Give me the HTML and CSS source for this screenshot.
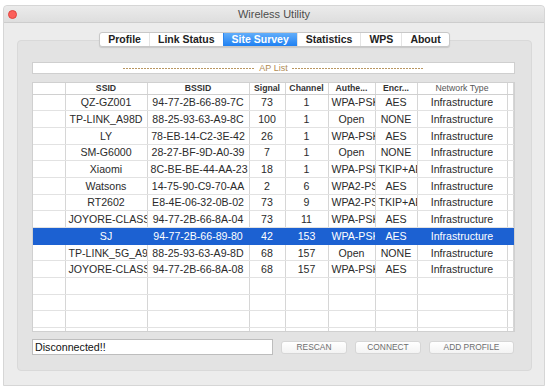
FILE: index.html
```html
<!DOCTYPE html>
<html lang="en">
<head>
    <meta charset="UTF-8">
    <meta name="viewport" content="width=device-width, initial-scale=1.0">
    <title>Wireless Utility</title>
    <link rel="stylesheet" href="styles.css">
</head>
<body>

<div class="window">
    <div class="titlebar">
        <span class="close-btn"></span>
        <span class="title">Wireless Utility</span>
        <span></span>
    </div>

    <div class="content">
        <div class="tabs">
            <span class="tab">Profile</span>
            <span class="tab">Link Status</span>
            <span class="tab active">Site Survey</span>
            <span class="tab">Statistics</span>
            <span class="tab">WPS</span>
            <span class="tab">About</span>
        </div>

        <div class="panel">
            <div class="group-title">
                <span class="dash"></span>
                <span class="group-label">AP List</span>
                <span class="dash"></span>
            </div>

            <div class="ap-table-wrap">
                <table class="ap-table">
                    <colgroup>
                        <col style="width:32px">
                        <col style="width:82px">
                        <col style="width:102px">
                        <col style="width:36px">
                        <col style="width:43px">
                        <col style="width:47px">
                        <col style="width:42px">
                        <col style="width:90px">
                        <col>
                    </colgroup>
                    <thead>
                        <tr>
                            <th></th>
                            <th>SSID</th>
                            <th>BSSID</th>
                            <th>Signal</th>
                            <th>Channel</th>
                            <th>Authe...</th>
                            <th>Encr...</th>
                            <th class="plain">Network Type</th>
                            <th></th>
                        </tr>
                    </thead>
                    <tbody>
                        <tr><td></td><td>QZ-GZ001</td><td>94-77-2B-66-89-7C</td><td>73</td><td>1</td><td>WPA-PSK</td><td>AES</td><td>Infrastructure</td><td></td></tr>
                        <tr><td></td><td>TP-LINK_A98D</td><td>88-25-93-63-A9-8C</td><td>100</td><td>1</td><td>Open</td><td>NONE</td><td>Infrastructure</td><td></td></tr>
                        <tr><td></td><td>LY</td><td>78-EB-14-C2-3E-42</td><td>26</td><td>1</td><td>WPA-PSK</td><td>AES</td><td>Infrastructure</td><td></td></tr>
                        <tr><td></td><td>SM-G6000</td><td>28-27-BF-9D-A0-39</td><td>7</td><td>1</td><td>Open</td><td>NONE</td><td>Infrastructure</td><td></td></tr>
                        <tr><td></td><td>Xiaomi</td><td>8C-BE-BE-44-AA-23</td><td>18</td><td>1</td><td>WPA-PSK</td><td>TKIP+AES</td><td>Infrastructure</td><td></td></tr>
                        <tr><td></td><td>Watsons</td><td>14-75-90-C9-70-AA</td><td>2</td><td>6</td><td>WPA2-PSK</td><td>AES</td><td>Infrastructure</td><td></td></tr>
                        <tr><td></td><td>RT2602</td><td>E8-4E-06-32-0B-02</td><td>73</td><td>9</td><td>WPA2-PSK</td><td>TKIP+AES</td><td>Infrastructure</td><td></td></tr>
                        <tr><td></td><td>JOYORE-CLASS</td><td>94-77-2B-66-8A-04</td><td>73</td><td>11</td><td>WPA-PSK</td><td>AES</td><td>Infrastructure</td><td></td></tr>
                        <tr class="selected"><td></td><td>SJ</td><td>94-77-2B-66-89-80</td><td>42</td><td>153</td><td>WPA-PSK</td><td>AES</td><td>Infrastructure</td><td></td></tr>
                        <tr><td></td><td>TP-LINK_5G_A98D</td><td>88-25-93-63-A9-8D</td><td>68</td><td>157</td><td>Open</td><td>NONE</td><td>Infrastructure</td><td></td></tr>
                        <tr><td></td><td>JOYORE-CLASS</td><td>94-77-2B-66-8A-08</td><td>68</td><td>157</td><td>WPA-PSK</td><td>AES</td><td>Infrastructure</td><td></td></tr>
                        <tr><td></td><td></td><td></td><td></td><td></td><td></td><td></td><td></td><td></td></tr>
                        <tr><td></td><td></td><td></td><td></td><td></td><td></td><td></td><td></td><td></td></tr>
                        <tr><td></td><td></td><td></td><td></td><td></td><td></td><td></td><td></td><td></td></tr>
                        <tr><td></td><td></td><td></td><td></td><td></td><td></td><td></td><td></td><td></td></tr>
                    </tbody>
                </table>
            </div>

            <div class="status-row">
                <div class="status">Disconnected!!</div>
                <button class="btn">RESCAN</button>
                <button class="btn">CONNECT</button>
                <button class="btn btn-wide">ADD PROFILE</button>
            </div>
        </div>
    </div>
</div>

</body>
</html>
```

FILE: styles.css
```css
* {
    box-sizing: border-box;
}
body {
    margin: 0;
    background: #fff;
    font-family: "Liberation Sans", Arial, sans-serif;
    color: #333;
}
.window {
    margin: 5px 0 0 3px;
    width: 542px;
    height: 381px;
    background: #ececec;
    border: 1px solid #d6d6d6;
    border-radius: 4px 4px 0 0;
    display: flex;
    flex-direction: column;
}
.titlebar {
    height: 17px;
    display: grid;
    grid-template-columns: 1fr auto 1fr;
    align-items: center;
    background: linear-gradient(#ebebeb, #dedede);
    border-bottom: 1px solid #cdcdcd;
    border-radius: 4px 4px 0 0;
}
.close-btn {
    width: 9px;
    height: 9px;
    margin-left: 4px;
    border-radius: 50%;
    background: #fc605b;
    border: 1px solid #e0443e;
}
.title {
    font-size: 11px;
    color: #4d4d4d;
}
.content {
    flex: 1;
    padding: 9px 12px 14px 13px;
    display: flex;
    flex-direction: column;
}
.tabs {
    align-self: center;
    display: flex;
    height: 15px;
    margin-bottom: -7px;
    position: relative;
    z-index: 1;
    background: #fff;
    border: 1px solid #c8c8c8;
    border-radius: 3px;
    box-shadow: 0 1px 1px rgba(0, 0, 0, 0.12);
    overflow: hidden;
}
.tab {
    padding: 0 8px;
    font-size: 10.5px;
    font-weight: bold;
    line-height: 13px;
    color: #222;
    border-left: 1px solid #e4e4e4;
}
.tab:first-child {
    border-left: none;
}
.tab.active {
    background: linear-gradient(#62aefa, #1f80f2);
    color: #fff;
    border-left-color: #2c86ef;
}
.panel {
    flex: 1;
    background: #e3e3e3;
    border: 1px solid #d9d9d9;
    border-radius: 4px;
    padding: 21px 16px 14px 14px;
    display: flex;
    flex-direction: column;
}
.group-title {
    height: 12px;
    background: #fff;
    border: 1px solid #cfcfcf;
    display: flex;
    align-items: center;
    justify-content: center;
    gap: 4px;
    margin-bottom: 8px;
}
.dash {
    width: 132px;
    height: 1px;
    background: repeating-linear-gradient(90deg, #b99660 0 2px, transparent 2px 3px);
}
.group-label {
    font-size: 9px;
    line-height: 1;
    color: #b08b55;
}
.ap-table-wrap {
    height: 250px;
    overflow: hidden;
    background: #fff;
    border: 1px solid #d0d0d0;
}
.ap-table {
    width: 100%;
    border-collapse: collapse;
    table-layout: fixed;
}
.ap-table th,
.ap-table td {
    padding: 0 3px;
    text-align: center;
    white-space: nowrap;
    overflow: hidden;
    border-right: 1px solid #d6d6d6;
    border-bottom: 1px solid #e2e2e2;
}
.ap-table th {
    height: 11px;
    font-size: 8.7px;
    font-weight: bold;
    line-height: 10px;
    color: #333;
    border-bottom-color: #d0d0d0;
}
.ap-table th.plain {
    font-weight: normal;
    color: #555;
}
.ap-table td {
    height: 16.7px;
    font-size: 10.6px;
    color: #2b2b2b;
}
.ap-table tr.selected td {
    background: #1c61d2;
    color: #fff;
    border-right-color: #1c61d2;
    border-bottom-color: #1c61d2;
}
.status-row {
    display: flex;
    align-items: center;
    margin-top: 7px;
    height: 16px;
}
.status {
    width: 241px;
    height: 16px;
    background: #fff;
    border: 1px solid #bdbdbd;
    padding-left: 2px;
    font-size: 10.7px;
    line-height: 14px;
    color: #111;
}
.btn {
    width: 66px;
    height: 13px;
    margin-left: 8px;
    padding: 0;
    background: linear-gradient(#fff, #f3f3f3);
    border: 1px solid #d6d6d6;
    border-radius: 3px;
    font-family: "Liberation Sans", Arial, sans-serif;
    font-size: 8.4px;
    line-height: 11px;
    color: #6e6e6e;
}
.btn-wide {
    width: 85px;
}
```
